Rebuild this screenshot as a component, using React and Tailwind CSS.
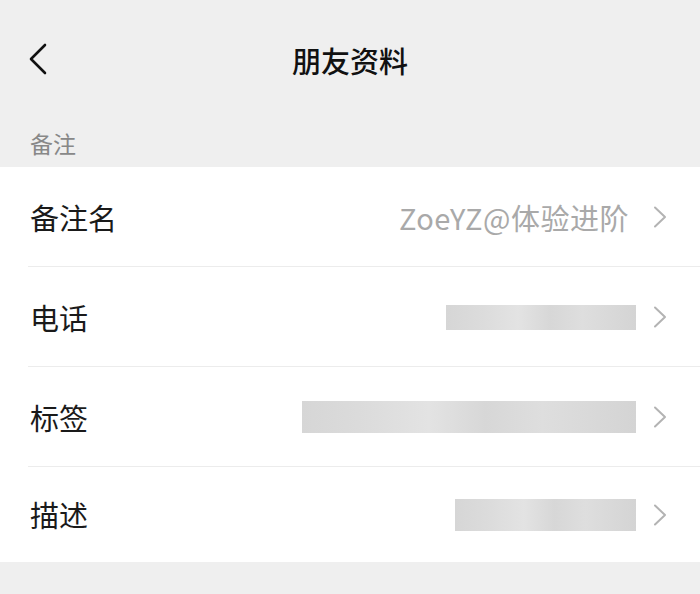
import React from 'react';

const FONT = { fontFamily: '"Noto Sans CJK SC", "Noto Sans", sans-serif' };

const Chevron = () => (
  <svg width="14" height="22" viewBox="0 0 14 22" className="shrink-0">
    <polyline points="2,1.5 12,11 2,20.5" fill="none" stroke="#b3b3b3" strokeWidth="2" strokeLinecap="round" strokeLinejoin="round" />
  </svg>
);

const Row = ({ label, children, last, height = 'h-[100px]' }) => (
  <div className={`flex items-center ${height} pl-[30px] pr-[33px] relative`}>
    <span className="text-[29px] text-[#1a1a1a] leading-none">{label}</span>
    <div className="flex-1 flex justify-end items-center">{children}</div>
    <Chevron />
    {!last && <div className="absolute left-[28px] right-0 bottom-0 h-px bg-[#ececec]" />}
  </div>
);

// blurred placeholder, like a masked value in the screenshot
const Blur = ({ className }) => (
  <div className={`mr-[17px] bg-[linear-gradient(90deg,#d6d6d6,#dcdcdc_20%,#e3e3e3_38%,#d7d7d7_55%,#dedede_72%,#d4d4d4)] ${className}`} />
);

export default function App() {
  return (
    <div className="w-[700px] h-[594px] bg-[#efefef] overflow-hidden" style={FONT}>
      {/* Nav bar */}
      <div className="relative h-[120px] flex items-center justify-center">
        <svg width="20" height="32" viewBox="0 0 20 32" className="absolute left-[28px] top-[43px]">
          <polyline points="17,2 3,16 17,30" fill="none" stroke="#111" strokeWidth="2.6" strokeLinecap="round" strokeLinejoin="round" />
        </svg>
        <h1 className="text-[29px] font-medium text-[#111] leading-none">朋友资料</h1>
      </div>

      <div className="h-[47px] flex items-center pl-[30px]">
        <span className="text-[23px] text-[#888] leading-none">备注</span>
      </div>

      <div className="bg-white">
        <Row label="备注名">
          <span className="text-[29px] text-[#a9a9a9] leading-none mr-[24px] tracking-[0.5px]">ZoeYZ@体验进阶</span>
        </Row>
        <Row label="电话">
          <Blur className="w-[190px] h-[25px]" />
        </Row>
        <Row label="标签">
          <Blur className="w-[334px] h-[32px]" />
        </Row>
        <Row label="描述" last height="h-[95px]">
          <Blur className="w-[181px] h-[32px]" />
        </Row>
      </div>
    </div>
  );
}
